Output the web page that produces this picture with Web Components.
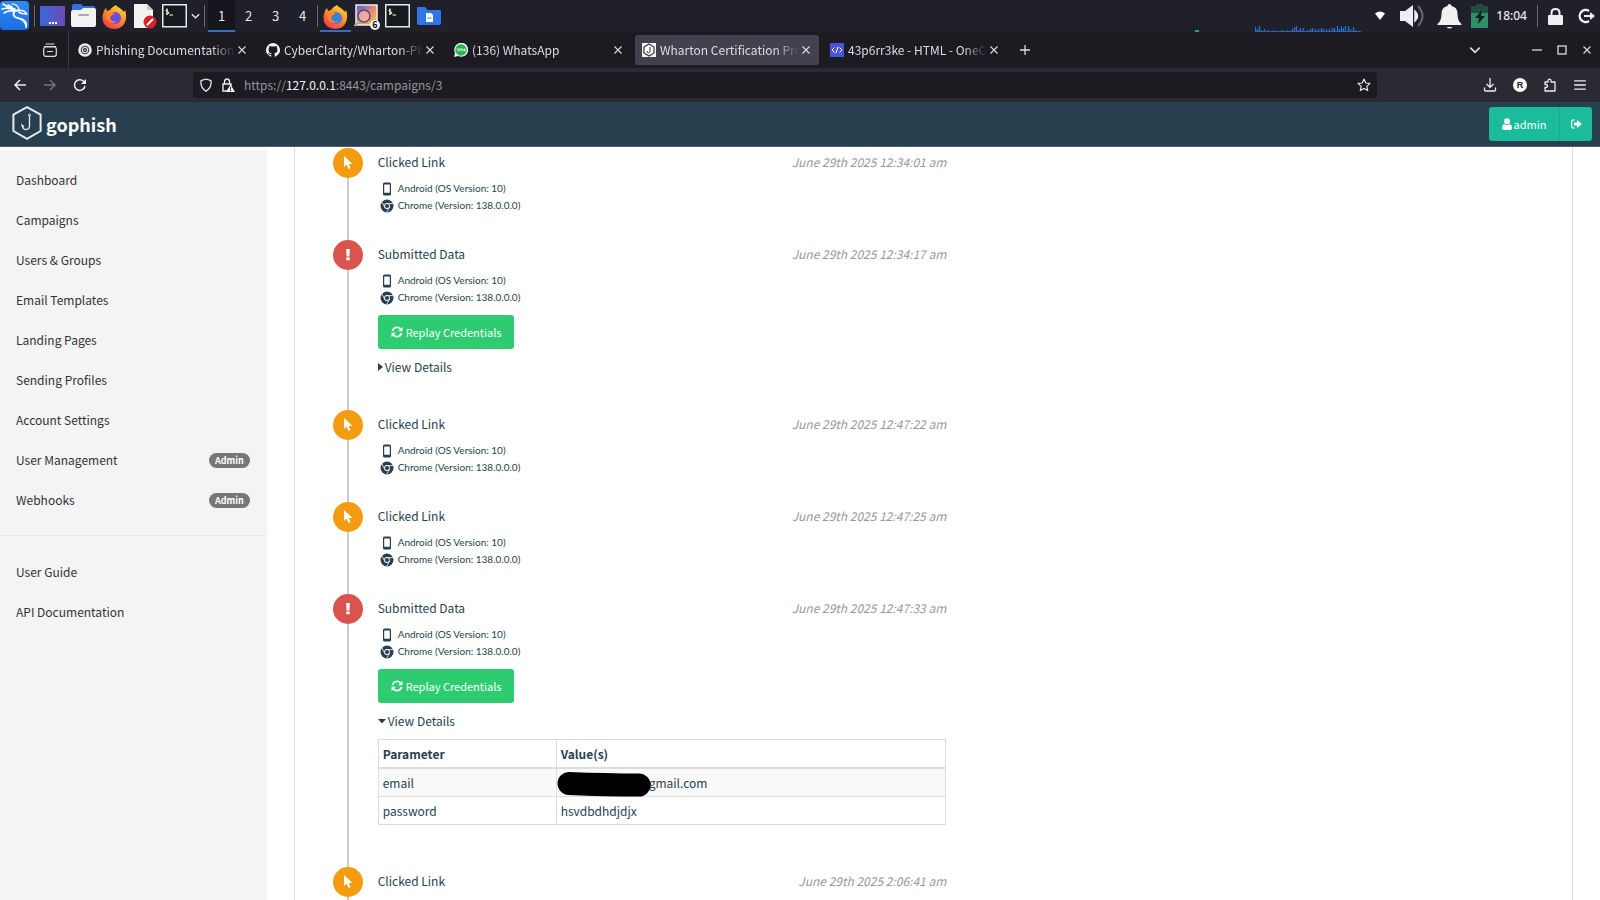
<!DOCTYPE html>
<html lang="en">
<head>
<meta charset="utf-8">
<title>Wharton Certification Program - Gophish</title>
<style>
html,body{margin:0;height:100%}
body{font-family:"Noto Sans CJK SC","Noto Sans",sans-serif;font-size:12px;line-height:20px;overflow:hidden;background:#fff}
</style>
</head>
<body>
<kali-desktop></kali-desktop>
<script>
const ICONS = {
 kali:`<svg viewBox="0 0 30 30"><defs><linearGradient id="k" x2="0" y2="1"><stop stop-color="#2f8bf5"/><stop offset="1" stop-color="#1a6fe0"/></linearGradient></defs><rect width="29" height="29" rx="4" fill="url(#k)"/><g fill="none" stroke="#fff" stroke-linecap="round" stroke-linejoin="round"><path d="M3 3l5 3 7 2M2 8l5-1 7 2M4 12l4-2 6 0M8 4l4 2" stroke-width="1.500"/><path d="M12 3c4 0 6 2 7 5" stroke-width="1.200"/><path d="M19 10c-5-2-7 3-4 6 4 2 9 1 11 6 .5 2 .5 3 0 4" stroke-width="1.800"/><path d="M18 9l6 1 3 3-5-.5-3-1" stroke-width="1.400"/><path d="M17 17c4 1 7 3 9 8" stroke-width="1"/></g></svg>`,
 desktop:`<svg viewBox="0 0 25 20"><defs><linearGradient id="d"><stop stop-color="#3b68d8"/><stop offset="1" stop-color="#6d4bb6"/></linearGradient></defs><rect width="25" height="20" rx="1" fill="url(#d)"/><path d="M9 16h2v2H9zm3 0h2v2h-2zm3 0h2v2h-2z" fill="#fff"/></svg>`,
 files:`<svg viewBox="0 0 25 24"><path d="M1 2q0-2 2-2h7l2 2h10q2 0 2 2v8H1z" fill="#2f72e4"/><path d="M0 8q0-2 2-2h8l2-2h11q2 0 2 2v15q0 2-2 2H2q-2 0-2-2z" fill="#f2f2f2"/><rect x="7" y="10" width="11" height="2" rx="1" fill="#aaa"/></svg>`,
 firefox:`<svg viewBox="0 0 25 25"><defs><linearGradient id="f" x1=".8" y1="0" x2=".2" y2="1"><stop stop-color="#ffe034"/><stop offset=".45" stop-color="#ff9025"/><stop offset="1" stop-color="#ff3050"/></linearGradient></defs><path d="M14 1c1 2 5 3 8 7l1-2c3 9 0 18-10 19C4 25-1 19 1 10c1-3 1-4 3-6l1 3 3-1c1-2 3-3 6-5z" fill="url(#f)"/><circle cx="13" cy="14" r="6" fill="var(--core,#6a4be0)"/><path d="M4 9c3-2 7-1 9 1-3 0-4 2-5 4 0 3 4 4 7 3-4 4-11 1-11-8z" fill="#ff8a20"/></svg>`,
 note:`<svg viewBox="0 0 25 25"><path d="M1 0h13l6 6v18H1z" fill="#f2f2f2"/><path d="M14 0l6 6h-6z" fill="#ccc"/><circle cx="17" cy="18" r="6.500" fill="#d81f26"/><path d="M14.500 20.500l5-5" stroke="#fff" stroke-width="2" stroke-linecap="round"/></svg>`,
 term:`<svg viewBox="0 0 25 24"><rect x=".75" y=".75" width="23.500" height="22" fill="#171a1d" stroke="#e8e8e8" stroke-width="1.500"/><path d="M6 6q-2-1-2 .5T6 8t0 2q-1 .5-2-.5M5 4.500V11M7.500 11H11" fill="none" stroke="#fff" stroke-width="1"/></svg>`,
 down:`<svg viewBox="0 0 12 12"><path d="M2 4l4 4 4-4" fill="none" stroke="currentColor" stroke-width="1.500"/></svg>`,
 viewer:`<svg viewBox="0 0 25 25"><defs><linearGradient id="v" x1="0" y1="0" x2="1" y2="1"><stop stop-color="#4a5ae0"/><stop offset=".5" stop-color="#e58a78"/><stop offset="1" stop-color="#fbc45a"/></linearGradient></defs><rect x="2" y="1" width="21" height="20" fill="url(#v)" stroke="#eee" stroke-width="1.500"/><circle cx="10" cy="12" r="6" fill="#f2b7b0" fill-opacity=".75" stroke="#5c4968" stroke-width="1.500"/><path d="M5.500 17l-5 5" stroke="#aaa" stroke-width="2"/></svg>`,
 folder:`<svg viewBox="0 0 24 20"><path d="M0 2q0-1 1-1h7l3 3h12q1 0 1 1v12q0 2-2 2H2q-2 0-2-2z" fill="#3076e8"/><path d="M9 7h5l2 2v7H9z" fill="#fff"/><path d="M10.500 12h4" stroke="#3076e8"/></svg>`,
 wifi:`<svg viewBox="0 0 12 12"><path d="M1 3.500q5-4 10 0L6 10z" fill="#fff"/></svg>`,
 volume:`<svg viewBox="0 0 26 24"><path d="M1 7h5l8-6v22l-8-6H1z" fill="#eee"/><path d="M16 7q5 5 0 10z" fill="#eee" stroke="#eee" stroke-width="1.500"/><path d="M19 2q9 10 0 20" fill="none" stroke="#666871" stroke-width="2"/></svg>`,
 bell:`<svg viewBox="0 0 25 25"><path d="M12.500 0q2 0 2 2 6 1 6 8 0 7 4 10v1H.5v-1q4-3 4-10 0-7 6-8 0-2 2-2zM9.500 23h6q-3 3-6 0z" fill="#f0f0f0"/></svg>`,
 battery:`<svg viewBox="0 0 17 24"><path d="M5 0h7v2h5v22H0V2h5z" fill="#1f4f3f"/><path d="M0 9h17v15H0z" fill="#2f8f66"/><path d="M11 6l-7 8h4l-1 6 7-8h-4z" fill="#161c20"/></svg>`,
 lock:`<svg viewBox="0 0 15 17"><rect y="7" width="15" height="10" rx="1" fill="#eee"/><path d="M3.500 8V5q0-4 4-4t4 4v3" fill="none" stroke="#eee" stroke-width="2"/></svg>`,
 logout:`<svg viewBox="0 0 17 16"><path d="M11 3a6 6 0 1 0 0 10" fill="none" stroke="#eee" stroke-width="2.400"/><path d="M6 7h6V4l5 4-5 4V9H6z" fill="#eee"/></svg>`,
 graph:`<svg viewBox="0 0 106 6"><path d="M.5 6V1m2 5V3m2 3V0m2 6V4m3 2V3m4 3V4m5 2V4m4 2V5m5 1V4m5 2V4m5 2V3m2 3V1m2 5V0m2 6V4m2 2V2m3 4V2m4 4V4m3 2V3m2 3V2m3 4V3m3 3V3m3 3V2m2 4V3m3 3V3m3 3V3m3 3V2m2 4V2m3 4V0m2 6V3m2 3V0m2 6V2m2 4V0m3 6V0m2 6V3m3 3V1m2 5V4" stroke="#2d6ec8" stroke-width="1.300"/><path d="M0 5.500h106" stroke="#2862b4"/></svg>`,
 fxview:`<svg viewBox="0 0 14 14"><g fill="none" stroke="currentColor" stroke-width="1.200" stroke-linecap="round"><path d="M3 1h8M1.500 3.500h11"/><rect x=".7" y="4" width="12.600" height="9.300" rx="2"/><path d="M4.500 8.500h5"/></g></svg>`,
 at:`<svg viewBox="0 0 14 14"><circle cx="7" cy="7" r="6.800" fill="#e9e9e9"/><g fill="none" stroke="#333" stroke-width="1"><circle cx="7" cy="7" r="3.800"/><circle cx="7" cy="7" r="1.700"/><path d="M7 5.500v3"/></g></svg>`,
 github:`<svg viewBox="0 0 16 16"><path fill="#f2f2f2" d="M8 0a8 8 0 0 0-2.530 15.590c.4.070.55-.17.550-.38v-1.490c-2.230.48-2.700-.95-2.700-.95-.36-.92-.89-1.170-.89-1.170-.73-.5.050-.49.050-.49.810.06 1.230.83 1.230.83.720 1.230 1.880.88 2.330.67.070-.52.280-.88.510-1.080-1.780-.2-3.640-.89-3.640-3.950 0-.87.310-1.590.820-2.150-.08-.2-.36-1.020.080-2.120 0 0 .67-.21 2.200.82a7.600 7.600 0 0 1 4 0c1.530-1.040 2.200-.82 2.200-.82.440 1.100.160 1.920.080 2.120.51.560.820 1.270.820 2.150 0 3.070-1.870 3.750-3.650 3.950.29.250.540.730.540 1.480v2.200c0 .21.150.46.550.38A8 8 0 0 0 8 0z"/></svg>`,
 whatsapp:`<svg viewBox="0 0 14 14"><path d="M0 14l1-4a7 7 0 1 1 3 3z" fill="#eee"/><circle cx="7" cy="7" r="5.700" fill="#25b34b"/><path d="M3.200 6.800a1.100 1.100 0 1 1 .3.700M6.200 6.800a1.100 1.100 0 1 1 .3.700M8.800 7h3M10.300 5.500v3" fill="none" stroke="#fff" stroke-width=".9"/></svg>`,
 hook:`<svg viewBox="0 0 14 14"><rect width="14" height="14" fill="#f3f3f3"/><path d="M7 1l5 3v6l-5 3-5-3V4z" fill="#fff" stroke="#333" stroke-width="1.200"/><path d="M8 4v4q0 2-1.500 2T5 8" fill="none" stroke="#333"/></svg>`,
 code:`<svg viewBox="0 0 14 14"><rect width="14" height="14" rx="1" fill="#4954d8"/><path d="M4.500 4.500L2 7l2.500 2.500M9.500 4.500L12 7 9.500 9.500M8 4L6 10" fill="none" stroke="#fff" stroke-width="1"/></svg>`,
 x:`<svg viewBox="0 0 10 10"><path d="M1.500 1.500l7 7m0-7l-7 7" stroke="currentColor" stroke-width="1.100"/></svg>`,
 plus:`<svg viewBox="0 0 10 10"><path d="M5 0v10M0 5h10" stroke="currentColor" stroke-width="1.300"/></svg>`,
 min:`<svg viewBox="0 0 10 10"><path d="M0 5h10" stroke="currentColor" stroke-width="1.300"/></svg>`,
 max:`<svg viewBox="0 0 10 10"><rect x="1" y="1" width="8" height="8" fill="none" stroke="currentColor" stroke-width="1.300"/></svg>`,
 back:`<svg viewBox="0 0 14 14"><path d="M13 7H2m5-5L2 7l5 5" fill="none" stroke="currentColor" stroke-width="1.500"/></svg>`,
 fwd:`<svg viewBox="0 0 14 14"><path d="M1 7h11M7 2l5 5-5 5" fill="none" stroke="currentColor" stroke-width="1.300"/></svg>`,
 reload:`<svg viewBox="0 0 14 14"><path d="M12 8a5.300 5.300 0 1 1-1.500-4.700L12 5" fill="none" stroke="currentColor" stroke-width="1.500"/><path d="M13 1v5H8z" fill="currentColor"/></svg>`,
 shield:`<svg viewBox="0 0 14 14"><path d="M7 1l5 1.700q.8 7-5 10.600Q1.200 9.700 2 2.700z" fill="none" stroke="currentColor" stroke-width="1.300" stroke-linejoin="round"/></svg>`,
 lockwarn:`<svg viewBox="0 0 14 14"><path d="M6 13H2V6h8v2M3.500 6V4Q3.500 1 6 1t2.500 3v2" fill="none" stroke="currentColor" stroke-width="1.400"/><path d="M9.500 6.500L14 14H5z" fill="#f4f4f4"/><path d="M9.500 9v2.500m0 .5v1" stroke="#1c1b22"/></svg>`,
 star:`<svg viewBox="0 0 14 14"><path d="M7 1l1.800 4 4.200.4-3.200 2.900 1 4.300L7 10.400l-3.800 2.200 1-4.300L1 5.400 5.200 5z" fill="none" stroke="currentColor" stroke-width="1.100" stroke-linejoin="round"/></svg>`,
 download:`<svg viewBox="0 0 14 14"><path d="M7 0v9M3.500 6L7 9.300 10.500 6M1.500 9.500V12q0 1 1 1h9q1 0 1-1V9.500" fill="none" stroke="currentColor" stroke-width="1.300"/></svg>`,
 puzzle:`<svg viewBox="0 0 14 14"><path d="M2 13V9.500h1q1.500 0 1.500-1.500T3 6.500H2V4h3V3q0-1.800 1.500-1.800T8 3v1h4v9z" fill="none" stroke="currentColor" stroke-width="1.300" stroke-linejoin="round"/></svg>`,
 menu:`<svg viewBox="0 0 12 12"><path d="M1 2.500h10M1 6h10M1 9.500h10" stroke="currentColor" stroke-width="1.200"/></svg>`,
 logo:`<svg viewBox="0 0 30 34"><g fill="none" stroke="#e4ebee"><path d="M15 1.200l13.600 7.300v16.500L15 32.800 1.400 25V8.500z" stroke-width="2"/><path d="M17.500 10v9.500q0 4-3.500 4t-4-4.500l2 2" stroke-width="1.300"/><circle cx="17.500" cy="9" r="1" stroke-width="1"/></g></svg>`,
 user:`<svg viewBox="0 0 10 12"><circle cx="5" cy="3.200" r="3" fill="#fff"/><path d="M2 6q3 1.800 6 0 2 1.200 2 4 0 2-2 2H2q-2 0-2-2 0-2.800 2-4z" fill="#fff"/></svg>`,
 signout:`<svg viewBox="0 0 11 10"><path d="M4 1H2Q.7 1 .7 2.300v5.400Q.7 9 2 9h2" fill="none" stroke="#fff" stroke-width="1.200"/><path d="M3 3.500h3V1l5 4-5 4V6.500H3z" fill="#fff"/></svg>`,
 cursor:`<svg viewBox="0 0 10 14"><path d="M1 0v11l2.700-2.400L5.500 13l2-.9-1.800-4.100H9.500z" fill="#fff"/></svg>`,
 bang:`<svg viewBox="0 0 10 14"><path d="M3.100 1h3.800l-.5 7.500H3.600zM3.300 9.600h3.400v2.700H3.300z" fill="#fff"/></svg>`,
 phone:`<svg viewBox="0 0 14 14"><path fill-rule="evenodd" fill="#283f50" d="M4.500.5h5q1.500 0 1.500 1.500v10q0 1.500-1.500 1.500h-5Q3 13.500 3 12V2Q3 .5 4.500.5zM4.200 2.500v8.200h5.600V2.500z"/></svg>`,
 chrome:`<svg viewBox="0 0 14 14"><circle cx="7" cy="7" r="6.500" fill="#283f50"/><path d="M13 4.600H7M1.900 3L4.800 8.300M6.700 13.300L9.500 8.200" stroke="#fff" stroke-width=".8"/><circle cx="7" cy="7" r="2.900" fill="#fff"/><circle cx="7" cy="7" r="2.100" fill="#283f50"/></svg>`,
 refresh:`<svg viewBox="0 0 12 12"><path d="M1.500 5A4.600 4.600 0 0 1 9.500 3M10.500 7A4.600 4.600 0 0 1 2.500 9" fill="none" stroke="#fff" stroke-width="1.700"/><path d="M11.500.8v4.400H7zM.5 11.200V6.800H5z" fill="#fff"/></svg>`,
 right:`<svg viewBox="0 0 5 10"><path d="M0 1l5 4-5 4z" fill="#283f50"/></svg>`,
 caret:`<svg viewBox="0 0 8 10"><path d="M0 3h8L4 7.500z" fill="#283f50"/></svg>`,
 scribble:`<svg viewBox="0 0 94 26"><path d="M12 12.500Q50 14 82 14" fill="none" stroke="#000" stroke-width="23" stroke-linecap="round"/></svg>`
};
const make = (tag, html) => customElements.define(tag, class extends HTMLElement {
  connectedCallback(){
    if (this.shadowRoot) return;
    this.attachShadow({mode:'open'}).innerHTML = typeof html === 'function' ? html(this) : html;
  }
});
const BTN = `button{font:inherit;color:inherit;background:none;border:0;padding:0;margin:0;display:flex;align-items:center;justify-content:center}`;

make('ui-icon', el => `<style>:host{display:block;flex:none;width:14px;height:14px}svg{display:block;width:100%;height:100%}</style>${ICONS[el.getAttribute('name')]}`);

make('task-item', el => `<style>${BTN}
:host{display:block;flex:none;height:32px}
button{height:32px;width:100%;position:relative}
:host([active]) button{box-shadow:inset 0 -2px #3470c4}
:host([current]) button{background:#15161c}
</style><button aria-label="${el.getAttribute('label')||el.textContent}"><slot></slot></button>`);

make('task-bar', `<style>
:host{display:flex;align-items:center;height:32px;flex:none;background:#1f2029;color:#e6e6e6;font-size:13px}
i{flex:none;width:1px;height:22px;background:#686a72}
.space{flex:1}
.w{width:27px}
.count{position:absolute;right:2px;bottom:2px;width:10px;height:10px;border-radius:5px;background:#f4f4f4;color:#111;font-size:9px;font-weight:bold;line-height:10px}
.tick{align-self:flex-end;width:4px;height:2px;background:#26a878;margin-right:56px}
.graph{align-self:flex-end;width:106px;height:6px;margin-right:12px}
.clock{font-family:"Noto Sans",sans-serif;font-size:12px;font-weight:500;margin:0 10px 0 8px}
</style>
<ui-icon name="kali" style="width:30px;height:30px"></ui-icon><i style="margin:0 2px 0 4px"></i>
<task-item label="Show desktop" style="width:31px"><ui-icon name="desktop" style="width:25px;height:20px"></ui-icon></task-item>
<task-item label="Files" style="width:31px"><ui-icon name="files" style="width:25px;height:24px"></ui-icon></task-item>
<task-item label="Firefox" style="width:31px"><ui-icon name="firefox" style="width:25px;height:25px"></ui-icon></task-item>
<task-item label="Text editor" style="width:31px"><ui-icon name="note" style="width:25px;height:25px"></ui-icon></task-item>
<task-item label="Terminal" style="width:27px"><ui-icon name="term" style="width:25px;height:24px"></ui-icon></task-item>
<task-item label="More terminals" style="width:15px"><ui-icon name="down" style="width:11px;height:12px"></ui-icon></task-item><i style="margin:0 3px 0 1px"></i>
<task-item class="w" active current>1</task-item><task-item class="w">2</task-item><task-item class="w">3</task-item><task-item class="w">4</task-item>
<i style="margin:0 2px 0 1px"></i>
<task-item label="Firefox window" active style="width:31px"><ui-icon name="firefox" style="width:25px;height:25px;--core:#3c7de0"></ui-icon></task-item>
<task-item label="Image viewer" style="width:31px"><ui-icon name="viewer" style="width:25px;height:25px"></ui-icon><span class="count">6</span></task-item>
<task-item label="Terminal window" style="width:31px"><ui-icon name="term" style="width:25px;height:24px"></ui-icon></task-item>
<task-item label="File manager" style="width:31px"><ui-icon name="folder" style="width:24px;height:20px"></ui-icon></task-item>
<span class="space"></span><span class="tick"></span><ui-icon class="graph" name="graph"></ui-icon>
<task-item label="Network" style="width:14px"><ui-icon name="wifi" style="width:12px;height:12px"></ui-icon></task-item>
<task-item label="Volume" style="width:50px"><ui-icon name="volume" style="width:26px;height:24px"></ui-icon></task-item>
<task-item label="Notifications" style="width:25px;margin-right:8px"><ui-icon name="bell" style="width:25px;height:25px"></ui-icon></task-item>
<task-item label="Battery" style="width:18px"><ui-icon name="battery" style="width:17px;height:24px"></ui-icon></task-item>
<time class="clock">18:04</time><i></i>
<task-item label="Lock" style="width:37px;margin-left:-1px;margin-right:-1px"><ui-icon name="lock" style="width:15px;height:17px"></ui-icon></task-item>
<task-item label="Log out" style="width:27px"><ui-icon name="logout" style="width:17px;height:16px"></ui-icon></task-item>`);

make('browser-tab', el => `<style>${BTN}
:host{display:flex;align-items:center;box-sizing:border-box;flex:0 1 184px;min-width:0;height:30px;padding:0 7px;border-radius:3px}
:host([selected]){background:#42414d}
.title{flex:1;min-width:0;margin-left:4px;justify-content:flex-start;overflow:hidden;white-space:nowrap;line-height:20px;-webkit-mask-image:linear-gradient(to left,transparent,#000 24px)}
.close{width:10px;height:10px;margin:0 1px 0 2px;flex:none}
ui-icon.c{width:10px;height:10px}
</style><ui-icon name="${el.getAttribute('icon')}"></ui-icon><button class="title"><slot></slot></button><button class="close" aria-label="Close tab"><ui-icon class="c" name="x"></ui-icon></button>`);

make('tab-strip', `<style>${BTN}
:host{display:flex;align-items:center;height:36px;flex:none;background:#1c1b22;color:#dcdce2;padding-right:1px}
.view{width:69px;height:36px;padding-left:32px;box-sizing:border-box;border-right:1px solid #3a3942;margin-right:2px}
.tabs{display:flex;gap:4px;flex:0 1 936px;min-width:0}
.new{width:36px;height:36px}
.space{flex:1}
.win{width:25px;height:36px}
.list{margin-right:37px}
ui-icon.s{width:10px;height:10px}
</style>
<button class="view" aria-label="Firefox View"><ui-icon name="fxview"></ui-icon></button>
<div class="tabs">
<browser-tab icon="at">Phishing Documentation G</browser-tab>
<browser-tab icon="github">CyberClarity/Wharton-Phi</browser-tab>
<browser-tab icon="whatsapp">(136) WhatsApp</browser-tab>
<browser-tab icon="hook" selected>Wharton Certification Pro</browser-tab>
<browser-tab icon="code">43p6rr3ke - HTML - OneC</browser-tab>
</div>
<button class="new" aria-label="New tab"><ui-icon class="s" name="plus"></ui-icon></button><span class="space"></span>
<button class="win list" aria-label="List all tabs"><ui-icon name="down"></ui-icon></button>
<button class="win" aria-label="Minimize"><ui-icon class="s" name="min"></ui-icon></button>
<button class="win" aria-label="Maximize"><ui-icon class="s" name="max"></ui-icon></button>
<button class="win" aria-label="Close"><ui-icon class="s" name="x"></ui-icon></button>`);

make('nav-bar', `<style>${BTN}
:host{display:flex;align-items:center;height:34px;flex:none;background:#2b2a33;color:#ececf0;padding:0 5px;box-sizing:border-box}
button{width:30px;height:30px}
.off{color:#77767f}
.url{flex:1;display:flex;align-items:center;height:26px;margin:0 98px 0 98px;background:#1c1b22;border-radius:3px;padding:0 6px}
.url button{width:14px;height:14px;margin-right:8px}
.addr{flex:1;outline:0;color:#96959c;line-height:20px;padding-left:1px}
.addr b{font-weight:400;color:#f5f5f7}
.url .fav{margin:0}
.acct{width:14px;height:14px;border-radius:7px;background:#fff;color:#222;font:bold 9px/14px "Liberation Sans",sans-serif;text-align:center}
</style>
<button aria-label="Back"><ui-icon name="back"></ui-icon></button>
<button class="off" aria-label="Forward"><ui-icon name="fwd"></ui-icon></button>
<button aria-label="Reload"><ui-icon name="reload"></ui-icon></button>
<div class="url"><button aria-label="Tracking protection"><ui-icon name="shield"></ui-icon></button><button aria-label="Connection not secure"><ui-icon name="lockwarn"></ui-icon></button>
<div class="addr" role="textbox" aria-label="Address" contenteditable="true" spellcheck="false">https://<b>127.0.0.1</b>:8443/campaigns/3</div>
<button class="fav" aria-label="Bookmark"><ui-icon name="star"></ui-icon></button></div>
<button aria-label="Downloads"><ui-icon name="download"></ui-icon></button>
<button aria-label="Account"><span class="acct">R</span></button>
<button aria-label="Extensions"><ui-icon name="puzzle"></ui-icon></button>
<button aria-label="Menu"><ui-icon name="menu"></ui-icon></button>`);

make('app-header', `<style>${BTN}
:host{display:flex;align-items:center;height:45px;box-sizing:border-box;flex:none;background:#283f50;border-bottom:1px solid #4d6070;padding:0 8px 0 12px;color:#fff}
a{display:flex;align-items:center;gap:4px;color:#fff;text-decoration:none;font-weight:bold;font-size:18px;line-height:24px;flex:1}
.logo{width:30px;height:34px;margin-bottom:2px}
.group{display:flex;height:34px;background:#1abc9c;border-radius:3px;font-size:11px}
.group button{gap:2px;width:70px;height:34px}
.group .out{width:33px;border-left:1px solid #18ab8e}
</style>
<a href="#"><ui-icon class="logo" name="logo"></ui-icon><span>gophish</span></a>
<div class="group"><button><ui-icon name="user" style="width:10px;height:12px"></ui-icon>admin</button><button class="out" aria-label="Sign out"><ui-icon name="signout" style="width:11px;height:10px"></ui-icon></button></div>`);

make('side-link', el => `<style>
:host{display:block}
a{display:flex;align-items:center;justify-content:space-between;height:40px;padding:0 17px 0 16px;color:#333;text-decoration:none}
span{background:#777;color:#fff;font-size:9px;font-weight:bold;line-height:15px;padding:0 6px;border-radius:8px}
</style><a href="#"><slot></slot>${el.hasAttribute('admin')?'<span>Admin</span>':''}</a>`);

make('side-nav', `<style>
:host{display:block;box-sizing:border-box;width:16.6667%;flex:none;background:#f4f4f4;border-top:3px solid #fdfdfd;padding-top:10px}
hr{border:0;border-top:1px solid #e9e9e9;margin:15px 0 16px}
</style><nav>
<side-link>Dashboard</side-link><side-link>Campaigns</side-link><side-link>Users &amp; Groups</side-link><side-link>Email Templates</side-link><side-link>Landing Pages</side-link><side-link>Sending Profiles</side-link><side-link>Account Settings</side-link><side-link admin>User Management</side-link><side-link admin>Webhooks</side-link>
<hr><side-link>User Guide</side-link><side-link>API Documentation</side-link></nav>`);

make('timeline-event', el => {
  const data = el.getAttribute('kind') === 'data';
  return `<style>
:host{display:grid;grid-template-columns:30px 1fr;column-gap:15px;color:#283f50}
.rail{display:flex;justify-content:center;background:linear-gradient(#ccc,#ccc) center/2px 100% no-repeat}
.dot{width:30px;height:30px;border-radius:50%;margin-top:-4px;background:${data?'#d9534f':'#f39c12'};display:flex;align-items:center;justify-content:center}
.dot ui-icon{width:10px;height:14px}
.body{padding-bottom:30px}
.top{display:flex;justify-content:space-between}
time{color:#999;font-style:italic}
.info{margin-top:8px}
.info div{display:flex;align-items:center;gap:4px;height:17px;padding-left:2px;font:10px/17px Lato,sans-serif}
</style><div class="rail"><div class="dot"><ui-icon name="${data?'bang':'cursor'}"></ui-icon></div></div>
<div class="body"><div class="top"><span>${data?'Submitted Data':'Clicked Link'}</span><time>${el.getAttribute('time')}</time></div>
${el.hasAttribute('brief')?'':'<div class="info"><div><ui-icon name="phone"></ui-icon>Android (OS Version: 10)</div><div><ui-icon name="chrome"></ui-icon>Chrome (Version: 138.0.0.0)</div></div>'}<slot></slot></div>`;
});

make('event-details', el => {
  const open = el.hasAttribute('open');
  return `<style>${BTN}
:host{display:block;margin:9px 0 7px}
.replay{height:34px;padding:0 13px;gap:3px;background:#2ecc71;color:#fff;border-radius:3px;font-size:11px}
.view{margin-top:8px;height:20px;gap:2px;font-size:12px}
</style><button class="replay"><ui-icon name="refresh" style="width:12px;height:12px"></ui-icon>Replay Credentials</button>
<button class="view" aria-expanded="${open}"><ui-icon name="${open?'caret':'right'}" style="width:${open?8:5}px;height:10px"></ui-icon>View Details</button><slot></slot>`;
});

make('param-table', `<style>
:host{display:block;margin:8px 0 16px}
table{width:100%;border-collapse:collapse;table-layout:fixed}
th,td{border:1px solid #ddd;text-align:left;padding:0 4px;height:27px;line-height:20px;position:relative}
th{border-bottom-width:2px}
th:first-child{width:169px}
tbody tr:first-child{background:#f9f9f9}
.hid{padding-left:92px}
.hid ui-icon{position:absolute;left:0;top:2px;width:94px;height:26px}
</style><table><thead><tr><th scope="col">Parameter</th><th scope="col">Value(s)</th></tr></thead>
<tbody><tr><td>email</td><td class="hid">gmail.com<ui-icon name="scribble"></ui-icon></td></tr><tr><td>password</td><td>hsvdbdhdjdjx</td></tr></tbody></table>`);

make('results-pane', `<style>
:host{display:block;flex:1;min-width:0;padding:0 27px;overflow:hidden;background:#fff}
.pane{min-height:100%;border:solid #ddd;border-width:0 1px;box-sizing:border-box}
.line{width:calc(50% - 25px);margin-left:38px;padding-top:5px}
</style><div class="pane"><div class="line">
<timeline-event time="June 29th 2025 12:34:01 am"></timeline-event>
<timeline-event kind="data" time="June 29th 2025 12:34:17 am"><event-details></event-details></timeline-event>
<timeline-event time="June 29th 2025 12:47:22 am"></timeline-event>
<timeline-event time="June 29th 2025 12:47:25 am"></timeline-event>
<timeline-event kind="data" time="June 29th 2025 12:47:33 am"><event-details open><param-table></param-table></event-details></timeline-event>
<timeline-event brief time="June 29th 2025 2:06:41 am"></timeline-event>
</div></div>`);

make('kali-desktop', `<style>
:host{display:flex;flex-direction:column;height:100vh}
main{display:flex;flex:1;min-height:0}
</style><task-bar></task-bar><tab-strip></tab-strip><nav-bar></nav-bar><app-header></app-header><main><side-nav></side-nav><results-pane></results-pane></main>`);
</script>
</body>
</html>
